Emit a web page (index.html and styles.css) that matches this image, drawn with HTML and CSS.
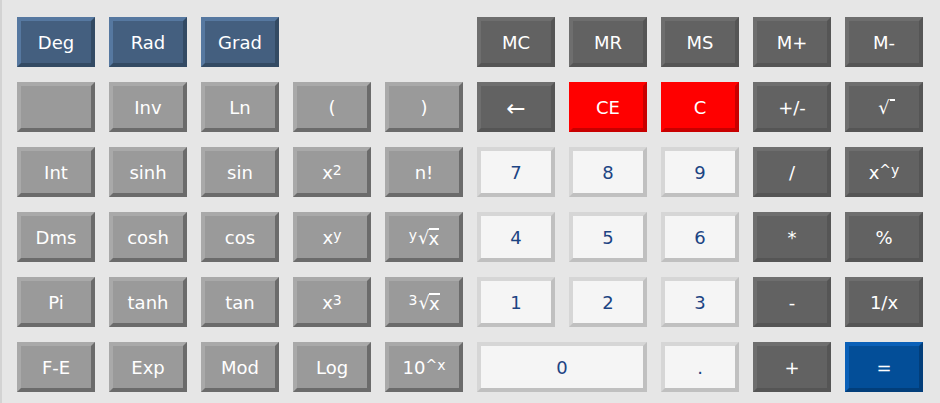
FILE: index.html
```html
<!DOCTYPE html>
<html>
<head>
<meta charset="utf-8">
<link rel="stylesheet" href="styles.css">
</head>
<body>
<div class="calc">
  <button class="b blue">Deg</button>
  <button class="b blue">Rad</button>
  <button class="b blue">Grad</button>
  <span class="gap"></span>
  <span class="gap"></span>
  <button class="b dark">MC</button>
  <button class="b dark">MR</button>
  <button class="b dark">MS</button>
  <button class="b dark">M+</button>
  <button class="b dark">M-</button>

  <button class="b grey"></button>
  <button class="b grey">Inv</button>
  <button class="b grey">Ln</button>
  <button class="b grey">(</button>
  <button class="b grey">)</button>
  <button class="b dark arrow">←</button>
  <button class="b red">CE</button>
  <button class="b red">C</button>
  <button class="b dark">+/-</button>
  <button class="b dark"><span class="rad">√<span class="bar"></span></span></button>

  <button class="b grey">Int</button>
  <button class="b grey">sinh</button>
  <button class="b grey">sin</button>
  <button class="b grey">x<sup>2</sup></button>
  <button class="b grey">n!</button>
  <button class="b num">7</button>
  <button class="b num">8</button>
  <button class="b num">9</button>
  <button class="b dark">/</button>
  <button class="b dark">x<sup>^y</sup></button>

  <button class="b grey">Dms</button>
  <button class="b grey">cosh</button>
  <button class="b grey">cos</button>
  <button class="b grey">x<sup>y</sup></button>
  <button class="b grey"><sup class="pre">y</sup>√<span class="ov">x</span></button>
  <button class="b num">4</button>
  <button class="b num">5</button>
  <button class="b num">6</button>
  <button class="b dark">*</button>
  <button class="b dark">%</button>

  <button class="b grey">Pi</button>
  <button class="b grey">tanh</button>
  <button class="b grey">tan</button>
  <button class="b grey">x<sup>3</sup></button>
  <button class="b grey"><sup class="pre">3</sup>√<span class="ov">x</span></button>
  <button class="b num">1</button>
  <button class="b num">2</button>
  <button class="b num">3</button>
  <button class="b dark">-</button>
  <button class="b dark">1/x</button>

  <button class="b grey">F-E</button>
  <button class="b grey">Exp</button>
  <button class="b grey">Mod</button>
  <button class="b grey">Log</button>
  <button class="b grey">10<sup>^x</sup></button>
  <button class="b num wide">0</button>
  <button class="b num">.</button>
  <button class="b dark">+</button>
  <button class="b eq">=</button>
</div>
</body>
</html>
```

FILE: styles.css
```css
html, body {
  margin: 0;
  padding: 0;
}
body {
  background: #e6e6e6;
  width: 940px;
  height: 403px;
  overflow: hidden;
  border-left: 2px solid #d3d3d3;
  box-sizing: border-box;
}
.calc {
  display: grid;
  grid-template-columns: repeat(10, 78px);
  grid-auto-rows: 50px;
  column-gap: 14px;
  row-gap: 15px;
  padding: 17px 0 0 15px;
}
.b {
  margin: 0;
  padding: 2px 0 0 0;
  border: 4px solid;
  font-family: "DejaVu Sans", Verdana, sans-serif;
  font-size: 18px;
  color: #fff;
  display: flex;
  align-items: center;
  justify-content: center;
  line-height: 1;
  cursor: pointer;
}
.arrow {
  font-size: 23px;
}
.b sup {
  font-size: 14px;
  position: relative;
  top: -3px;
  vertical-align: super;
  line-height: 0;
}
.b sup.pre {
  margin-right: 1px;
}
.ov {
  border-top: 2px solid currentColor;
  line-height: 1;
  margin-left: -1px;
}
.rad {
  position: relative;
}
.bar {
  position: absolute;
  top: 0;
  right: -5px;
  width: 5px;
  height: 2px;
  background: #fff;
}
.blue {
  background: #445f7f;
  border-color: #5678a0 #334a63 #334a63 #5678a0;
}
.dark {
  background: #626262;
  border-color: #6e6e6e #555555 #555555 #6e6e6e;
}
.grey {
  background: #9a9a9a;
  border-color: #a9a9a9 #6b6b6b #6b6b6b #a9a9a9;
}
.red {
  background: #ff0000;
  border-color: #ff0000 #c80000 #c80000 #ff0000;
}
.num {
  background: #f5f5f5;
  border-color: #d6d6d6 #c0c0c0 #c0c0c0 #d6d6d6;
  color: #1c4483;
}
.wide {
  grid-column: span 2;
}
.eq {
  background: #034e98;
  border-color: #0a60b8 #023e7a #023e7a #0a60b8;
}
```
